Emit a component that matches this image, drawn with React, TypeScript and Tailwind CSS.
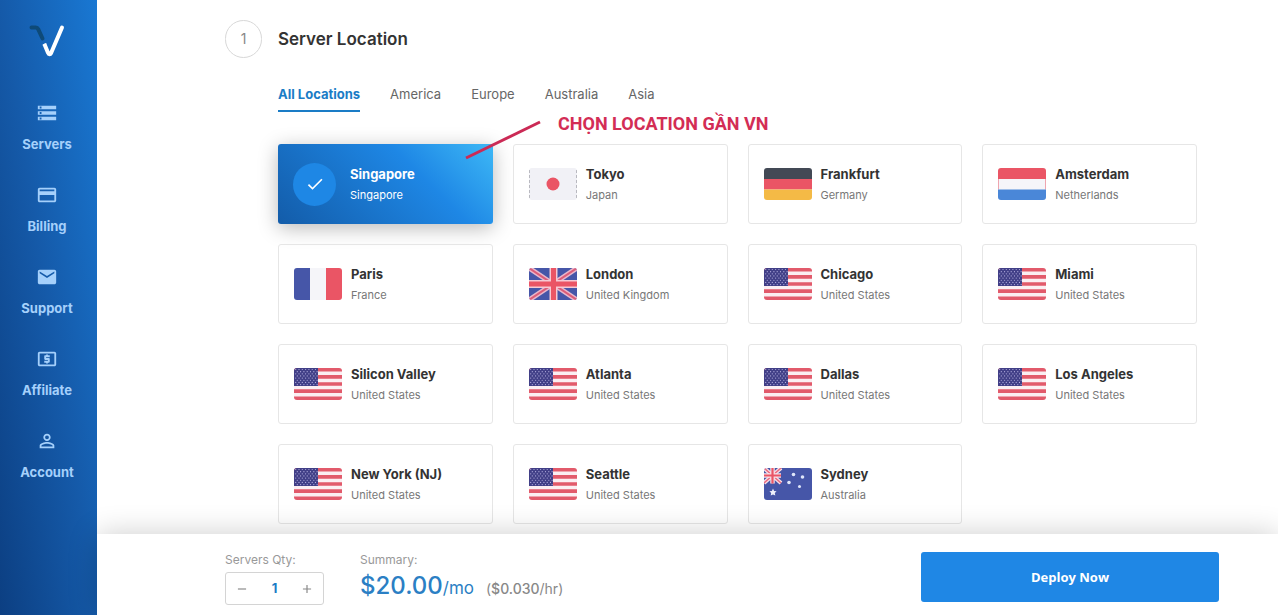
import { useState, type ReactNode } from 'react';
import {
  MdAdd,
  MdCheck,
  MdCreditCard,
  MdEmail,
  MdLocalAtm,
  MdPersonOutline,
  MdRemove,
  MdStorage,
} from 'react-icons/md';

const navItems = [
  { label: 'Servers', icon: MdStorage },
  { label: 'Billing', icon: MdCreditCard },
  { label: 'Support', icon: MdEmail },
  { label: 'Affiliate', icon: MdLocalAtm },
  { label: 'Account', icon: MdPersonOutline },
];

const tabs = ['All Locations', 'America', 'Europe', 'Australia', 'Asia'];

type FlagCode = 'sg' | 'jp' | 'de' | 'nl' | 'fr' | 'gb' | 'us' | 'au';

const locations: { city: string; country: string; flag: FlagCode; region: string }[] = [
  { city: 'Singapore', country: 'Singapore', flag: 'sg', region: 'Asia' },
  { city: 'Tokyo', country: 'Japan', flag: 'jp', region: 'Asia' },
  { city: 'Frankfurt', country: 'Germany', flag: 'de', region: 'Europe' },
  { city: 'Amsterdam', country: 'Netherlands', flag: 'nl', region: 'Europe' },
  { city: 'Paris', country: 'France', flag: 'fr', region: 'Europe' },
  { city: 'London', country: 'United Kingdom', flag: 'gb', region: 'Europe' },
  { city: 'Chicago', country: 'United States', flag: 'us', region: 'America' },
  { city: 'Miami', country: 'United States', flag: 'us', region: 'America' },
  { city: 'Silicon Valley', country: 'United States', flag: 'us', region: 'America' },
  { city: 'Atlanta', country: 'United States', flag: 'us', region: 'America' },
  { city: 'Dallas', country: 'United States', flag: 'us', region: 'America' },
  { city: 'Los Angeles', country: 'United States', flag: 'us', region: 'America' },
  { city: 'New York (NJ)', country: 'United States', flag: 'us', region: 'America' },
  { city: 'Seattle', country: 'United States', flag: 'us', region: 'America' },
  { city: 'Sydney', country: 'Australia', flag: 'au', region: 'Australia' },
];

const starRows = [0, 1, 2, 3, 4, 5, 6, 7];
const starCols = [0, 1, 2, 3, 4, 5, 6];

// All flags are drawn on a 48x32 canvas
const flagArt: Record<FlagCode, ReactNode> = {
  sg: (
    <>
      <path fill="#ea5565" d="M0 0h48v16H0z" />
      <path fill="#f5f5f9" d="M0 16h48v16H0z" />
    </>
  ),
  jp: (
    <>
      <path fill="#f1f1f6" d="M0 0h48v32H0z" />
      <path stroke="#b9b9c0" strokeWidth="1" strokeDasharray="3 2" d="M.5 2v28M47.5 2v28" />
      <circle cx="24" cy="16" r="6.5" fill="#ea5565" />
    </>
  ),
  de: (
    <>
      <path fill="#434955" d="M0 0h48v11H0z" />
      <path fill="#ea5565" d="M0 11h48v10.5H0z" />
      <path fill="#f4ba46" d="M0 21.5h48V32H0z" />
    </>
  ),
  nl: (
    <>
      <path fill="#f5f5f9" d="M0 0h48v32H0z" />
      <path stroke="#ea5565" strokeWidth="1" strokeOpacity="0.5" d="M.5 11v10.5M47.5 11v10.5" />
      <path fill="#ea5565" d="M0 0h48v11H0z" />
      <path fill="#4a87d8" d="M0 21.5h48V32H0z" />
    </>
  ),
  fr: (
    <>
      <path fill="#4656a8" d="M0 0h16v32H0z" />
      <path fill="#f5f5f9" d="M16 0h16v32H16z" />
      <path fill="#ea5565" d="M32 0h16v32H32z" />
    </>
  ),
  gb: (
    <>
      <path fill="#4656a8" d="M0 0h48v32H0z" />
      <path stroke="#e9b7cb" strokeWidth="5" d="M0 0l48 32M48 0L0 32" />
      <path stroke="#dc5c78" strokeWidth="2" d="M0 0l48 32M48 0L0 32" />
      <path stroke="#f6c9d3" strokeWidth="8" d="M24.5 0v32M0 16h48" />
      <path stroke="#ea5565" strokeWidth="5" d="M24.5 0v32M0 16h48" />
    </>
  ),
  us: (
    <>
      <path fill="#fbeef2" d="M0 0h48v32H0z" />
      <path
        stroke="#e25a6b"
        strokeWidth="3.6"
        d="M0 1.8h48M0 8.9h48M0 16h48M0 23.1h48M0 30.2h48"
      />
      <path fill="#413f87" d="M0 0h24v18H0z" />
      {starRows.map((row) =>
        starCols.map((col) => (
          <circle
            key={`${row}-${col}`}
            cx={1.7 + col * 3.3 + (row % 2 ? 1.6 : 0)}
            cy={1.5 + row * 2.15}
            r="0.6"
            fill="#b3aede"
          />
        )),
      )}
    </>
  ),
  au: (
    <>
      <path fill="#4656a8" d="M0 0h48v32H0z" />
      <path stroke="#f8dfe6" strokeWidth="4" d="M0 0l17 15M17 0L0 15" />
      <path stroke="#ea6a80" strokeWidth="1.5" d="M0 0l17 15M17 0L0 15" />
      <path stroke="#f8dfe6" strokeWidth="4.5" d="M8.5 0v15.5M0 7.5h17" />
      <path stroke="#ea5565" strokeWidth="2.2" d="M8.5 0v15.5M0 7.5h17" />
      <path
        fill="#eef0fb"
        d="M9 20.5l1.1 2.4 2.5.3-1.8 1.8.5 2.6L9 26.4l-2.3 1.2.5-2.6-1.8-1.8 2.5-.3z"
      />
      <g fill="#dfe6fa">
        <circle cx="29.5" cy="6.5" r="1.8" />
        <circle cx="38.5" cy="9" r="1.8" />
        <circle cx="25" cy="14.5" r="1.8" />
        <circle cx="35.5" cy="18.5" r="1.5" />
      </g>
    </>
  ),
};

function Flag({ code }: { code: FlagCode }) {
  return (
    <svg className="w-12 h-8 rounded-[3px]" viewBox="0 0 48 32" fill="none" aria-hidden="true">
      {flagArt[code]}
    </svg>
  );
}

function Sidebar() {
  return (
    <aside className="w-[97px] shrink-0 bg-[linear-gradient(to_top_right,#0c3f82,#155aa9_50%,#1978d3)] pr-[3px]">
      <a href="#home" aria-label="Home" className="flex justify-center pt-6">
        <svg className="w-9 h-[34px]" viewBox="0 0 36 34" fill="none">
          <path
            d="M2.5 3.5h4.2c1.3 0 2 .6 2.5 1.7L13.500 14.500"
            stroke="#0e4a78"
            strokeWidth="4"
            strokeLinecap="round"
            strokeLinejoin="round"
          />
          <path d="M13.800 21.500l3.600-1.800" stroke="#fff" strokeWidth="1.500" />
          <path
            d="M16 21.500l3 7.300c.7 1.800 2.300 1.800 3.100.2L33 3.500"
            stroke="#fff"
            strokeWidth="4"
            strokeLinecap="round"
            strokeLinejoin="round"
          />
        </svg>
      </a>
      <nav className="flex flex-col items-center gap-[30px] pt-11">
        {navItems.map(({ label, icon: Icon }) => (
          <a
            key={label}
            href={`#${label.toLowerCase()}`}
            className="flex flex-col items-center gap-2.5 text-[13px] leading-5 font-bold text-[#a5d0fb]"
          >
            <Icon size={22} aria-hidden="true" />
            {label}
          </a>
        ))}
      </nav>
    </aside>
  );
}

export default function App() {
  const [tab, setTab] = useState('All Locations');
  const [selected, setSelected] = useState('Singapore');
  const [qty, setQty] = useState(1);

  const visible = locations.filter((item) => tab === 'All Locations' || item.region === tab);

  return (
    <div className="flex min-h-screen bg-white font-['Inter',sans-serif] text-[#333]">
      <Sidebar />

      <div className="flex flex-1 min-w-0 flex-col">
        <main className="flex-1 pl-32 pr-[81px] pt-5 pb-2">
          {/* Step header */}
          <div className="flex items-center gap-4">
            <span className="flex w-[37px] h-[38px] items-center justify-center rounded-full border border-[#d8d8d8] text-sm text-[#888]">
              1
            </span>
            <h1 className="text-[17px] leading-6 font-semibold text-[#333]">Server Location</h1>
          </div>

          <div className="relative pl-[53px]">
            {/* Region tabs */}
            <div className="flex gap-[30px] pt-[26px]" role="tablist">
              {tabs.map((name) => (
                <button
                  key={name}
                  type="button"
                  role="tab"
                  aria-selected={tab === name}
                  onClick={() => setTab(name)}
                  className={
                    tab === name
                      ? 'h-7 border-b-2 border-[#1a7cc6] pb-2 text-[13px] leading-5 font-bold text-[#1a7cc6]'
                      : 'h-7 border-b-2 border-transparent pb-2 text-[13px] leading-5 text-[#666]'
                  }
                >
                  {name}
                </button>
              ))}
            </div>

            {/* Location cards */}
            <div className="mt-8 grid grid-cols-4 gap-5">
              {visible.map((item) => {
                const active = item.city === selected;
                return (
                  <button
                    key={item.city}
                    type="button"
                    aria-pressed={active}
                    onClick={() => setSelected(item.city)}
                    className={
                      active
                        ? 'flex h-20 items-center gap-[9px] rounded-[3px] bg-[linear-gradient(45deg,#135ca9,#1e87e5_65%,#3db8f6)] px-[15px] text-left text-white shadow-[0_4px_20px_rgba(0,0,0,0.28)]'
                        : 'flex h-20 items-center gap-[9px] rounded-[3px] border border-[#e6e6e6] px-[15px] text-left'
                    }
                  >
                    <span className="w-12 shrink-0">
                      {active ? (
                        <span className="flex w-[43px] h-[43px] items-center justify-center rounded-full bg-[#1e87e5]">
                          <MdCheck size={20} aria-hidden="true" />
                        </span>
                      ) : (
                        <Flag code={item.flag} />
                      )}
                    </span>
                    <span className="flex flex-col gap-1">
                      <span className="text-[13px] leading-[18px] font-bold">{item.city}</span>
                      <span className={active ? 'text-[11px] leading-4' : 'text-[11px] leading-4 text-[#777]'}>
                        {item.country}
                      </span>
                    </span>
                  </button>
                );
              })}
            </div>

            {/* Callout pointing at the first card */}
            <div className="pointer-events-none absolute left-[240px] top-[54px] flex items-start gap-4">
              <svg className="w-[77px] h-12" viewBox="0 0 77 48" fill="none" aria-hidden="true">
                <path d="M1 46L75 10" stroke="#cb2a55" strokeWidth="3" />
              </svg>
              <p className="font-['Roboto',sans-serif] text-lg leading-6 font-bold whitespace-nowrap text-[#d32d55]">
                CHỌN LOCATION GẦN VN
              </p>
            </div>
          </div>
        </main>

        {/* Order bar */}
        <footer className="sticky bottom-0 flex h-[81px] items-start bg-white pl-32 pr-[59px] pt-[18px] shadow-[0_0_30px_rgba(0,0,0,0.2)]">
          <div className="w-[135px]">
            <label htmlFor="qty" className="block text-xs leading-4 text-[#999]">
              Servers Qty:
            </label>
            <div className="mt-1 flex w-[99px] h-[33px] items-center rounded-[3px] border border-[#d4d4d4] text-[#888]">
              <button
                type="button"
                aria-label="Decrease"
                className="flex w-8 justify-center"
                onClick={() => setQty(Math.max(1, qty - 1))}
              >
                <MdRemove size={14} />
              </button>
              <input
                id="qty"
                value={qty}
                onChange={(e) => setQty(Math.max(1, Number(e.target.value) || 1))}
                className="min-w-0 flex-1 text-center text-[13px] font-bold text-[#1a7cc6] outline-none"
              />
              <button
                type="button"
                aria-label="Increase"
                className="flex w-8 justify-center"
                onClick={() => setQty(qty + 1)}
              >
                <MdAdd size={14} />
              </button>
            </div>
          </div>

          <div>
            <p className="text-xs leading-4 text-[#999]">Summary:</p>
            <p className="flex items-baseline leading-9 text-[#2b7fc4]">
              <span className="text-2xl leading-9 font-medium">${(20 * qty).toFixed(2)}</span>
              <span className="text-[17px]">/mo</span>
              <span className="ml-3 text-sm text-[#888]">
                (<span className="font-medium">${(0.03 * qty).toFixed(3)}</span>/hr)
              </span>
            </p>
          </div>

          <button
            type="button"
            className="ml-auto h-[50px] w-[298px] rounded-[3px] bg-[#1f87e5] pt-0.5 font-['Open_Sans',sans-serif] text-[13px] font-bold text-white"
          >
            Deploy Now
          </button>
        </footer>
      </div>
    </div>
  );
}
